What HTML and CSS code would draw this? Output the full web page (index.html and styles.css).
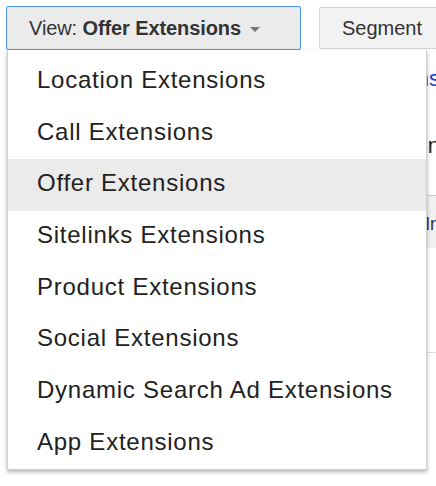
FILE: index.html
```html
<!DOCTYPE html>
<html lang="en">
<head>
    <meta charset="UTF-8">
    <meta name="viewport" content="width=device-width, initial-scale=1.0">
    <title>View: Offer Extensions</title>
    <link rel="stylesheet" href="styles.css">
</head>
<body>
    <div class="toolbar">
        <button class="view-btn">View: <b>Offer Extensions</b> <span class="caret"></span></button>
        <button class="segment-btn">Segment</button>
    </div>

    <div class="content">
        <div class="summary"><a href="#">Show all extensions</a></div>
        <div class="heading">Campaign</div>
        <div class="table-head">Nr.</div>
        <div class="table-row"></div>
    </div>

    <ul class="menu">
        <li>Location Extensions</li>
        <li>Call Extensions</li>
        <li class="active">Offer Extensions</li>
        <li>Sitelinks Extensions</li>
        <li>Product Extensions</li>
        <li>Social Extensions</li>
        <li>Dynamic Search Ad Extensions</li>
        <li>App Extensions</li>
    </ul>
</body>
</html>
```

FILE: styles.css
```css
* {
    box-sizing: border-box;
    margin: 0;
    padding: 0;
    font-family: 'Liberation Sans', Arial, Helvetica, sans-serif;
}

html, body {
    overflow: hidden;
}

body {
    background-color: white;
    position: relative;
    height: 486px;
}

.toolbar {
    display: flex;
    gap: 18px;
    padding: 6px 0 0 6px;
}

.view-btn, .segment-btn {
    flex-shrink: 0;
    height: 44px;
    font-size: 20px;
    color: #333;
    text-align: left;
    white-space: nowrap;
}

.view-btn {
    width: 295px;
    padding-left: 22px;
    background-color: #ebebeb;
    border: 1px solid #4d90fe;
    border-radius: 2px;
    letter-spacing: -0.1px;
}

.view-btn b {
    color: #333;
}

.caret {
    display: inline-block;
    margin-left: 4px;
    vertical-align: middle;
    border-left: 5px solid transparent;
    border-right: 5px solid transparent;
    border-top: 5px solid #777;
}

.segment-btn {
    width: 140px;
    margin-top: 1px;
    height: 42px;
    padding-left: 22px;
    background-color: #f2f2f2;
    border: 1px solid #d6d6d6;
    border-radius: 2px;
}

/* page behind the menu, only its right edge shows */
.content {
    width: 440px;
    text-align: right;
    font-size: 22px;
    white-space: nowrap;
}

.summary {
    height: 50px;
    line-height: 58px;
}

.summary a {
    color: #2440d8;
    text-decoration: none;
}

.heading {
    height: 95px;
    line-height: 92px;
    color: #222;
}

.table-head {
    height: 53px;
    line-height: 56px;
    margin-left: 10px;
    background-color: #f1f1f1;
    border-top: 1px solid #ccc;
    color: #333;
    font-size: 18px;
}

.table-row {
    height: 105px;
    margin-left: 10px;
    border-bottom: 1px solid #ddd;
}

.menu {
    position: absolute;
    left: 7px;
    top: 50px;
    width: 420px;
    height: 420px;
    padding-top: 6px;
    list-style: none;
    background-color: white;
    border: 1px solid #d0d0d0;
    border-top: none;
    box-shadow: 0 2px 4px rgba(0,0,0,0.3);
}

.menu li {
    height: 51.7px;
    line-height: 47.7px;
    padding-left: 29px;
    font-size: 24px;
    letter-spacing: 0.75px;
    color: #222;
    white-space: nowrap;
}

.menu li.active {
    background-color: #ebebeb;
}
```
